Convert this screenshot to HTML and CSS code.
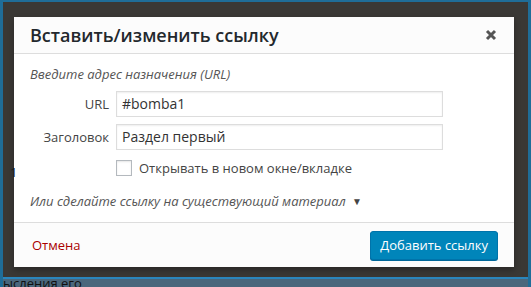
FILE: index.html
```html
<!DOCTYPE html>
<html lang="ru">
<head>
<meta charset="utf-8">
<link rel="stylesheet" href="styles.css">
</head>
<body>
<div class="frame">
  <div class="overlay">
    <span class="page-digit">1</span>
    <div class="modal">
      <div class="modal-head">
        <h1 class="modal-title">Вставить/изменить ссылку</h1>
        <span class="close">
          <svg width="12" height="12" viewBox="0 0 12 12"><path d="M2 2 L10 10 M10 2 L2 10" stroke="#555" stroke-width="3" stroke-linecap="butt"/></svg>
        </span>
      </div>
      <div class="modal-body">
        <p class="hint">Введите адрес назначения (URL)</p>
        <div class="row">
          <label class="label">URL</label>
          <div class="input">#bomba1</div>
        </div>
        <div class="row">
          <label class="label">Заголовок</label>
          <div class="input">Раздел первый</div>
        </div>
        <div class="row check-row">
          <span class="label"></span>
          <span class="checkbox"></span>
          <span class="check-text">Открывать в новом окне/вкладке</span>
        </div>
        <p class="hint existing">Или сделайте ссылку на существующий материал <span class="arrow">▼</span></p>
      </div>
      <div class="modal-foot">
        <span class="cancel">Отмена</span>
        <span class="button">Добавить ссылку</span>
      </div>
    </div>
  </div>
  <div class="bottom-strip">ысления его</div>
</div>
</body>
</html>
```

FILE: styles.css
```css
html, body {
  margin: 0;
  padding: 0;
  width: 531px;
  height: 287px;
  overflow: hidden;
  background: #1f6d98;
  font-family: "Open Sans", "Noto Sans", sans-serif;
}
.frame {
  padding: 2px 3px 0 3px;
  height: 285px;
  display: flex;
  flex-direction: column;
}
.overlay {
  background: #3a3835;
  height: 277px;
  padding: 15px 14px 0 11px;
  box-sizing: border-box;
  position: relative;
}
.page-digit {
  position: absolute;
  left: 7px;
  top: 161px;
  font-size: 13px;
  color: #1a1a1a;
}
.modal {
  width: 500px;
  height: 250px;
  background: #fff;
  display: flex;
  flex-direction: column;
  box-shadow: 0 3px 6px rgba(0,0,0,0.3);
}
.modal-head {
  height: 36px;
  background: #fcfcfc;
  border-bottom: 1px solid #ddd;
  display: flex;
  align-items: center;
  justify-content: space-between;
  padding: 0 17px 0 16px;
  flex-shrink: 0;
}
.modal-title {
  margin: 0;
  font-size: 18px;
  font-weight: 600;
  color: #23282d;
  line-height: 36px;
}
.close {
  display: flex;
  width: 12px;
  height: 12px;
}
.modal-body {
  flex: 1;
  padding: 12px 16px 0 16px;
}
.hint {
  margin: 0;
  font-size: 13px;
  font-style: italic;
  color: #555;
  line-height: 16px;
}
.row {
  display: flex;
  align-items: center;
  margin-top: 7px;
}
.hint + .row { margin-top: 9px; }
.label {
  width: 79px;
  text-align: right;
  padding-right: 7px;
  font-size: 13px;
  color: #444;
  flex-shrink: 0;
}
.input {
  width: 315px;
  height: 24px;
  border: 1px solid #ddd;
  box-shadow: inset 0 1px 2px rgba(0,0,0,0.07);
  font-size: 14px;
  color: #333;
  line-height: 24px;
  padding: 0 5px;
}
.check-row {
  margin-top: 9px;
}
.checkbox {
  width: 14px;
  height: 14px;
  border: 1px solid #b4b9be;
  box-shadow: inset 0 1px 2px rgba(0,0,0,0.1);
  background: #fff;
  margin-right: 7px;
}
.check-text {
  font-size: 13px;
  color: #444;
}
.existing {
  margin-top: 16px;
}
.arrow {
  font-style: normal;
  font-size: 10px;
  color: #444;
  margin-left: 3px;
  vertical-align: 1px;
}
.modal-foot {
  height: 44px;
  border-top: 1px solid #ddd;
  background: #fcfcfc;
  display: flex;
  align-items: center;
  justify-content: space-between;
  padding: 0 16px 0 18px;
  flex-shrink: 0;
}
.cancel {
  font-size: 13px;
  color: #a00;
}
.button {
  background: #0085ba;
  border: 1px solid #0073aa;
  border-radius: 3px;
  box-shadow: 0 1px 0 #006799;
  color: #fff;
  font-size: 13px;
  height: 27px;
  line-height: 27px;
  padding: 0 9px;
  margin-top: 1px;
}
.bottom-strip {
  height: 8px;
  overflow: hidden;
  border-top: 2px solid #2a86bd;
  background: #4a677c;
  color: #111;
  font-size: 13px;
  line-height: 9px;
}
```
